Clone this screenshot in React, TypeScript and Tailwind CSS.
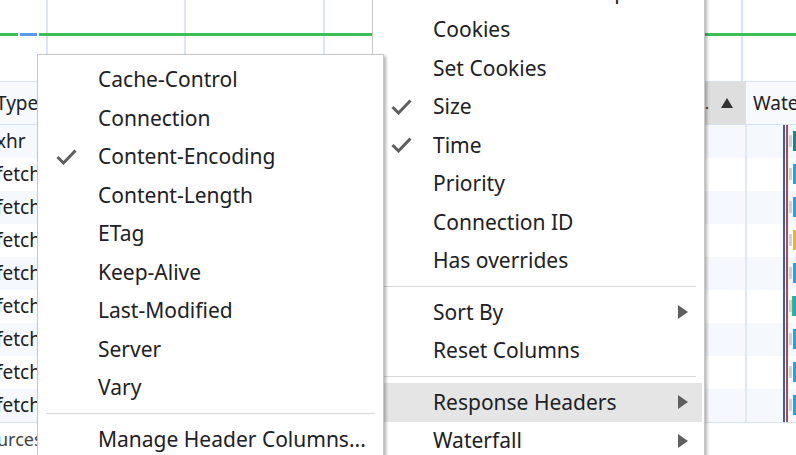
import React from "react";

function Check() {
  return (
    <svg width="21" height="16" viewBox="0 0 21 16" className="block">
      <path d="M1.5 8 L7.5 14 L19.5 1.5" fill="none" stroke="#5f5f5f" strokeWidth="3" />
    </svg>
  );
}

function Arrow() {
  return (
    <svg width="10" height="14" viewBox="0 0 10 14" className="block">
      <path d="M0 0 L10 7 L0 14 Z" fill="#5f5f5f" />
    </svg>
  );
}

type Item = { label: string; checked?: boolean; arrow?: boolean; active?: boolean } | "sep";

function Menu({ items }: { items: Item[] }) {
  return (
    <>
      {items.map((it, i) =>
        it === "sep" ? (
          <div key={i} className="mx-[6px] my-[6px] h-px bg-[#d9d9d9]" />
        ) : (
          <div
            key={i}
            className={`flex h-[38.5px] items-center pl-[16px] pr-[14px] ${it.active ? "bg-[#e5e5e5]" : ""}`}
          >
            <div className="w-[42px] shrink-0">{it.checked ? <Check /> : null}</div>
            <div className="flex-1 whitespace-nowrap">{it.label}</div>
            {it.arrow ? <Arrow /> : null}
          </div>
        )
      )}
    </>
  );
}

const rows = ["xhr", "fetch", "fetch", "fetch", "fetch", "fetch", "fetch", "fetch", "fetch"];
const barColors = ["#14889b", "#17a6f2", "#17a6f2", "#f5b21b", "#17a6f2", "#17a6f2", "#17a6f2", "#17a6f2", "#17a6f2"];

export default function App() {
  return (
    <div className="relative h-[455px] w-[796px] overflow-hidden bg-white font-['Noto_Sans',sans-serif] text-[#202124]">
      {/* overview */}
      <div className="relative h-[81px]">
        <div className="absolute left-[46px] top-0 h-full w-[2px] bg-[#d8e5fa]" />
        <div className="absolute left-[184px] top-0 h-full w-[2px] bg-[#d8e5fa]" />
        <div className="absolute left-[323px] top-0 h-full w-[2px] bg-[#d8e5fa]" />
        <div className="absolute left-[741px] top-0 h-full w-[2px] bg-[#d8e5fa]" />
        <div className="absolute left-0 right-0 top-[33px] flex h-[3px] gap-[2px]">
          <div className="w-[18px] bg-[#3cbf57]" />
          <div className="w-[17px] bg-[#5a9af2]" />
          <div className="flex-1 bg-[#3cbf57]" />
        </div>
      </div>
      {/* header */}
      <div className="flex h-[44px] border-y border-[#d6e2f5] bg-[#f7f9fd] text-[19px]">
        <div className="flex flex-1 items-center">
          <span className="ml-[-4px]">Type</span>
        </div>
        <div className="flex w-[45px] items-center bg-[#dedede] pl-[1px]">
          <span className="text-[15px]">..</span>
          <svg width="12" height="10" viewBox="0 0 12 10" className="ml-[12px]">
            <path d="M0 10 L6 0 L12 10 Z" fill="#333" />
          </svg>
        </div>
        <div className="flex w-[51px] items-center border-l border-[#d6e2f5] pl-[7px]">Wate</div>
      </div>
      {/* rows */}
      <div className="border-b border-[#d6e2f5]">
        {rows.map((r, i) => (
          <div key={i} className={`flex h-[33px] text-[19px] ${i % 2 === 0 ? "bg-[#f5f8fd]" : "bg-white"}`}>
            <div className="flex flex-1 items-center">
              <span className="ml-[-4px]">{r}</span>
            </div>
            <div className="w-[45px]" />
            <div className="flex w-[51px] items-stretch border-l-2 border-[#dfe8f8] pl-[36px]">
              <div className="w-[2px] bg-[#2b5fd0]" />
              <div className="ml-px w-[2px] bg-[#c9433d]" />
              <div className="ml-px mt-[10px] h-[12px] w-[3px] bg-[#d2d2d2]" />
              <div className={`mt-[6px] h-[20px] w-px ${i === 5 ? "bg-[#3cbf57]" : ""}`} />
              <div className="mt-[6px] h-[20px] flex-1" style={{ backgroundColor: barColors[i] }} />
            </div>
          </div>
        ))}
      </div>
      <div className="flex h-[33px] items-center text-[18px] text-[#444]">
        <span className="ml-[-3px]">urces</span>
      </div>

      {/* right (main) context menu */}
      <div className="absolute left-[372px] top-[-35px] z-10 w-[333px] border border-[#c8c8c8] bg-white pt-[6px] text-[21px] shadow-[2px_2px_3px_rgba(0,0,0,0.3)]">
        <div className="px-[2px]">
          <Menu
            items={[
              { label: "Initiator Address Space" },
              { label: "Cookies" },
              { label: "Set Cookies" },
              { label: "Size", checked: true },
              { label: "Time", checked: true },
              { label: "Priority" },
              { label: "Connection ID" },
              { label: "Has overrides" },
              "sep",
              { label: "Sort By", arrow: true },
              { label: "Reset Columns" },
              "sep",
              { label: "Response Headers", arrow: true, active: true },
              { label: "Waterfall", arrow: true },
            ]}
          />
        </div>
      </div>

      {/* submenu */}
      <div className="absolute left-[37px] top-[54px] z-20 w-[347px] border border-[#c8c8c8] bg-white pt-[5.5px] pb-[10px] text-[21px] shadow-[2px_2px_3px_rgba(0,0,0,0.3)]">
        <div className="px-[2px]">
          <Menu
            items={[
              { label: "Cache-Control" },
              { label: "Connection" },
              { label: "Content-Encoding", checked: true },
              { label: "Content-Length" },
              { label: "ETag" },
              { label: "Keep-Alive" },
              { label: "Last-Modified" },
              { label: "Server" },
              { label: "Vary" },
              "sep",
              { label: "Manage Header Columns..." },
            ]}
          />
        </div>
      </div>
    </div>
  );
}
